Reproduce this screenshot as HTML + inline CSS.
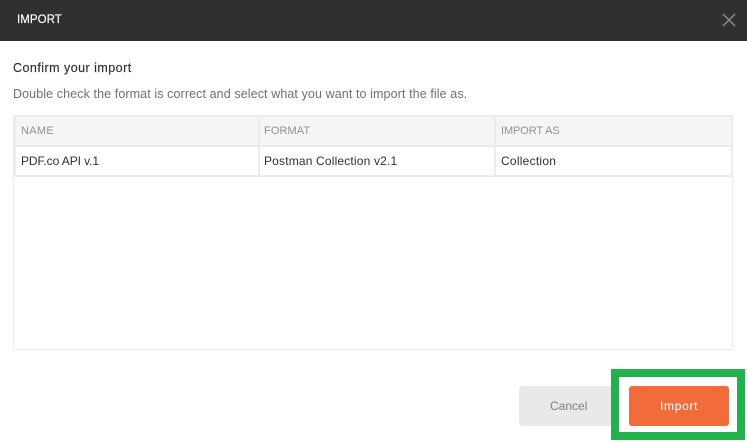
<!DOCTYPE html>
<html>
<head>
<meta charset="utf-8">
<style>
html,body{margin:0;padding:0;background:#fff;}
body{width:747px;height:445px;position:relative;overflow:hidden;font-family:"Liberation Sans",sans-serif;}
div{position:absolute;box-sizing:border-box;}
.t{white-space:nowrap;line-height:16px;font-size:12px;}
.g{background:#ececec;}
.h{font-size:11px;color:#929292;letter-spacing:0.1px;top:123px;}
</style>
</head>
<body>
<div style="left:0;top:0;width:747px;height:41px;background:#303030;"></div>
<div class="t" style="left:17px;top:12px;color:#fff;font-size:11.5px;letter-spacing:0.05px;-webkit-text-stroke:0.15px #fff;">IMPORT</div>
<svg style="position:absolute;left:722px;top:13px;" width="14" height="14" viewBox="0 0 14 14"><path d="M1 1L13 13M13 1L1 13" stroke="#8f8f8f" stroke-width="1.4" fill="none"/></svg>

<div class="t" style="left:13px;top:60px;color:#303030;letter-spacing:0.47px;font-size:12.5px;-webkit-text-stroke:0.15px #303030;">Confirm your import</div>
<div class="t" style="left:13px;top:86px;color:#707070;letter-spacing:0.1px;font-size:12.5px;">Double check the format is correct and select what you want to import the file as.</div>

<div style="left:13px;top:115px;width:720px;height:235px;border:1px solid #ececec;"></div>
<div style="left:14px;top:116px;width:718px;height:30px;background:#f5f5f5;"></div>
<div class="g" style="left:13px;top:115px;width:720px;height:2px;"></div>
<div class="g" style="left:13px;top:145px;width:720px;height:2px;"></div>
<div class="g" style="left:13px;top:175px;width:720px;height:2px;"></div>
<div class="g" style="left:13px;top:115px;width:3px;height:62px;"></div>
<div class="g" style="left:258px;top:115px;width:2px;height:62px;"></div>
<div class="g" style="left:494px;top:115px;width:2px;height:62px;"></div>
<div class="g" style="left:731px;top:115px;width:2px;height:62px;"></div>

<div class="t h" style="left:21px;letter-spacing:0.3px;">NAME</div>
<div class="t h" style="left:264px;">FORMAT</div>
<div class="t h" style="left:501px;letter-spacing:-0.1px;">IMPORT AS</div>

<div class="t" style="left:21px;top:153px;color:#303030;letter-spacing:-0.08px;">PDF.co API v.1</div>
<div class="t" style="left:264px;top:153px;color:#303030;letter-spacing:0.17px;">Postman Collection v2.1</div>
<div class="t" style="left:501px;top:153px;color:#303030;letter-spacing:0.25px;">Collection</div>

<div style="left:519px;top:386px;width:100px;height:40px;background:#e9e9e9;border-radius:3px;"></div>
<div class="t" style="left:550px;top:398px;color:#808080;letter-spacing:0;">Cancel</div>

<div style="left:611px;top:369px;width:134px;height:71px;border:8px solid #22b14c;background:#fff;"></div>
<div style="left:629px;top:386px;width:100px;height:40px;background:#f26b3a;border-radius:3px;"></div>
<div class="t" style="left:660px;top:398px;color:#fff;letter-spacing:0.7px;">Import</div>
</body>
</html>
